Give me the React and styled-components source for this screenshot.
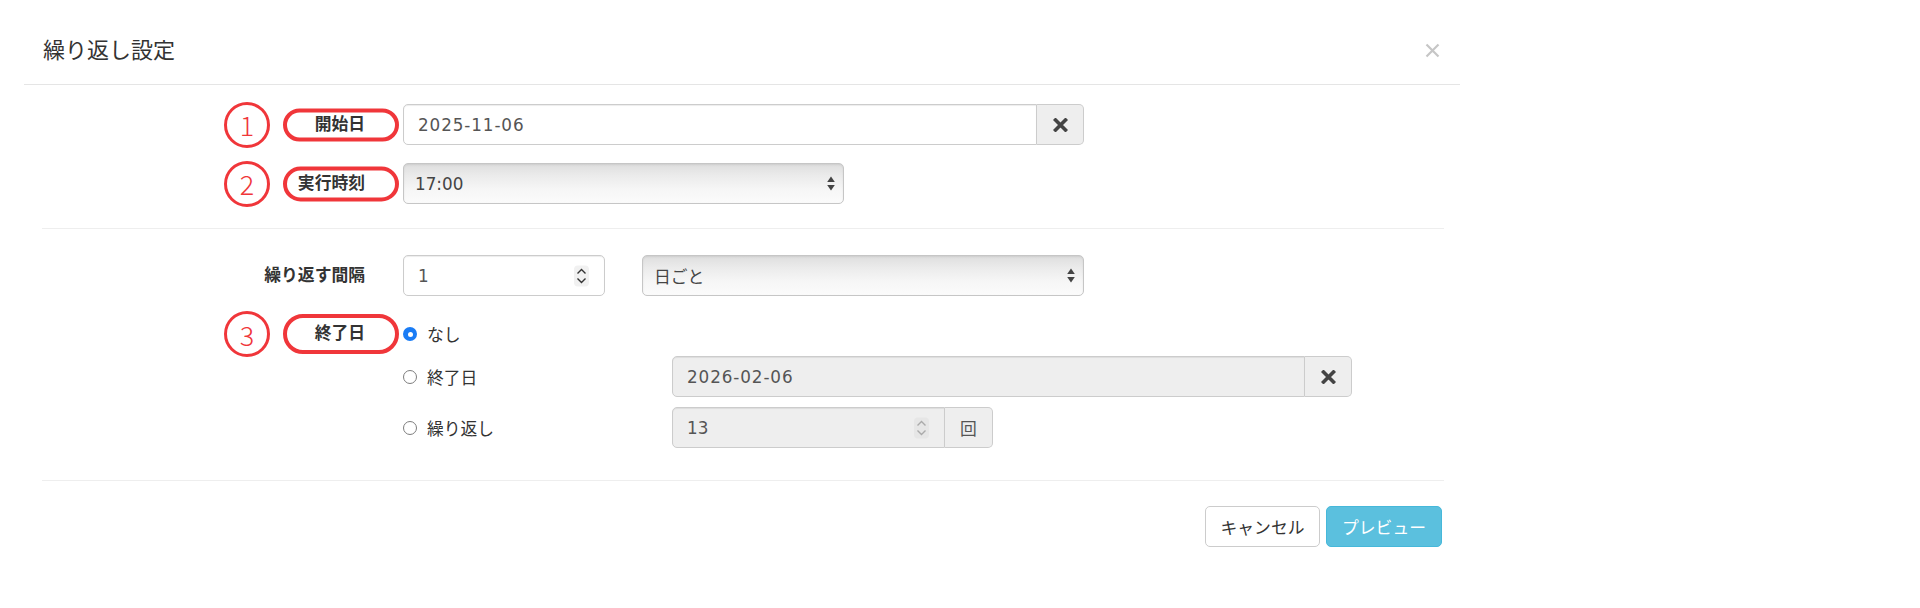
import React from "react";
import styled, { createGlobalStyle } from "styled-components";

const RED = "#f0363a";

const GlobalStyle = createGlobalStyle`
  html, body { margin: 0; padding: 0; background: #fff; }
  body {
    font-family: "Liberation Sans", "Noto Sans CJK JP", sans-serif;
    color: #333;
    font-size: 16.8px;
  }
  * { box-sizing: border-box; }
`;

const Modal = styled.div`
  width: 1436px;
  margin: 17px 0 0 24px;
  background: #fff;
`;

const Header = styled.div`
  display: flex;
  align-items: center;
  justify-content: space-between;
  padding: 18px 20px 18px 19px;
  border-bottom: 1px solid #e5e5e5;
`;

const Title = styled.h4`
  margin: 0;
  font-size: 22px;
  line-height: 31px;
  font-weight: normal;
  color: #333;
`;

const CloseButton = styled.button`
  border: 0;
  background: none;
  padding: 0;
  width: 16px;
  height: 16px;
  display: flex;
  align-items: center;
  justify-content: center;
  cursor: pointer;
`;

const Body = styled.div`
  padding: 19px 16px 0 18px;
`;

const Section = styled.div`
  display: flex;
  flex-direction: column;
  gap: 18px;
`;

const Divider = styled.hr`
  border: 0;
  border-top: 1px solid #eee;
  margin: ${(p) => p.$margin};
`;

const Row = styled.div`
  display: grid;
  grid-template-columns: 323px auto;
  column-gap: 38px;
  align-items: start;
`;

const Label = styled.label`
  position: relative;
  display: block;
  text-align: right;
  font-weight: bold;
  font-size: 16.8px;
  line-height: ${(p) => p.$h || 41}px;
  height: ${(p) => p.$h || 41}px;
  color: #333;
`;

const Pill = styled.span`
  position: absolute;
  right: -34px;
  top: 50%;
  width: 116px;
  height: ${(p) => p.$h}px;
  transform: translateY(-50%);
  border: 4px solid ${RED};
  border-radius: 999px;
`;

const NumberBadge = styled.span`
  position: absolute;
  right: 95px;
  top: 50%;
  width: 46px;
  height: 46px;
  transform: translateY(-50%);
  border: 3px solid ${RED};
  border-radius: 50%;
  color: ${RED};
  font-family: "Noto Sans CJK JP", "Liberation Sans", sans-serif;
  font-weight: 300;
  font-size: 27px;
  line-height: 1;
  display: flex;
  align-items: center;
  justify-content: center;
`;

const Controls = styled.div`
  display: flex;
  align-items: center;
  gap: ${(p) => p.$gap || 0}px;
`;

const Group = styled.div`
  display: flex;
  width: ${(p) => p.$w}px;
  height: 41px;
`;

const Field = styled.div`
  position: relative;
  height: 41px;
  display: flex;
  align-items: center;
  padding: 0 14px;
  border: 1px solid #ccc;
  border-radius: ${(p) => (p.$joined ? "5px 0 0 5px" : "5px")};
  background: ${(p) => (p.$disabled ? "#eeeeee" : "#fff")};
  box-shadow: inset 0 1px 1px rgba(0, 0, 0, 0.075);
  color: #555;
  font-family: "DejaVu Sans", "Noto Sans CJK JP", sans-serif;
  font-size: 16.8px;
  letter-spacing: ${(p) => (p.$date ? "0.9px" : "0")};
  width: ${(p) => (p.$w ? `${p.$w}px` : "auto")};
  flex: ${(p) => (p.$w ? "none" : "1")};
`;

const Addon = styled.div`
  width: ${(p) => p.$w || 47}px;
  height: 41px;
  display: flex;
  align-items: center;
  justify-content: center;
  border: 1px solid #ccc;
  border-left: 0;
  border-radius: 0 5px 5px 0;
  background: #eee;
  color: #555;
  font-family: "Noto Sans CJK JP", sans-serif;
  font-size: 16.8px;
`;

const Select = styled.div`
  width: ${(p) => p.$w}px;
  height: 41px;
  display: flex;
  align-items: center;
  justify-content: space-between;
  padding: 0 8px 0 11px;
  border: 1px solid #c6c6c6;
  border-radius: 5px;
  background: linear-gradient(to bottom, #dedede 0%, #ebebeb 30%, #f6f6f6 65%, #fbfbfb 100%);
  box-shadow: inset 0 1px 2px rgba(0, 0, 0, 0.08);
  color: #444;
  font-family: "DejaVu Sans", "Noto Sans CJK JP", sans-serif;
  font-size: 16.8px;
`;

const Spinner = styled.span`
  position: absolute;
  right: 15px;
  top: 50%;
  transform: translateY(-50%);
  width: 15px;
  height: 21px;
  border-radius: 4px;
  background: ${(p) => (p.$disabled ? "#e6e6e6" : "#f1f1f1")};
  display: flex;
  align-items: center;
  justify-content: center;
`;

const EndGroup = styled.div`
  display: flex;
  flex-direction: column;
`;

const OptionRow = styled.div`
  display: grid;
  grid-template-columns: 269px auto;
  align-items: center;
  height: ${(p) => p.$h}px;
  margin-top: ${(p) => p.$mt || 0}px;
`;

const RadioLabel = styled.div`
  display: flex;
  align-items: center;
  gap: 10px;
  font-size: 16.8px;
  color: #333;
`;

const Radio = styled.span`
  width: 14px;
  height: 14px;
  border-radius: 50%;
  display: inline-flex;
  align-items: center;
  justify-content: center;
  background: ${(p) => (p.$checked ? "#1a7cf5" : "#fff")};
  border: ${(p) => (p.$checked ? "0" : "1.5px solid #7d7d7d")};
  &::after {
    content: "";
    display: ${(p) => (p.$checked ? "block" : "none")};
    width: 5px;
    height: 5px;
    border-radius: 50%;
    background: #fff;
  }
`;

const Footer = styled.div`
  display: flex;
  justify-content: flex-end;
  gap: 6px;
  padding: 0 18px 18px;
`;

const Button = styled.button`
  height: 41px;
  padding: 0 14.4px;
  min-width: ${(p) => p.$w}px;
  border-radius: 5px;
  font-family: "Liberation Sans", "Noto Sans CJK JP", sans-serif;
  font-size: 16.8px;
  cursor: pointer;
  border: 1px solid ${(p) => (p.$primary ? "#46b8da" : "#ccc")};
  background: ${(p) => (p.$primary ? "#5bc0de" : "#fff")};
  color: ${(p) => (p.$primary ? "#fff" : "#333")};
`;

const XIcon = () => (
  <svg width="15" height="15" viewBox="0 0 15 15">
    <path d="M1.5 1.5 L13.5 13.5 M13.5 1.5 L1.5 13.5" stroke="#c6c6c6" strokeWidth="2.2" />
  </svg>
);

const RemoveIcon = () => (
  <svg width="15" height="14" viewBox="0 0 15 14">
    <path d="M2.5 2 L12.5 12 M12.5 2 L2.5 12" stroke="#444" strokeWidth="3.6" strokeLinecap="square" />
  </svg>
);

const SelectArrows = () => (
  <svg width="8" height="15" viewBox="0 0 8 15">
    <polygon points="4,0.5 7.8,6 0.2,6" fill="#444" />
    <polygon points="0.2,9 7.8,9 4,14.5" fill="#444" />
  </svg>
);

const Chevrons = ({ color }) => (
  <svg width="11" height="17" viewBox="0 0 11 17">
    <polyline points="1.5,6 5.5,2 9.5,6" fill="none" stroke={color} strokeWidth="1.4" />
    <polyline points="1.5,11 5.5,15 9.5,11" fill="none" stroke={color} strokeWidth="1.4" />
  </svg>
);

const Annotated = ({ n, pillH, h, children }) => (
  <Label $h={h}>
    <NumberBadge>{n}</NumberBadge>
    <Pill $h={pillH} />
    {children}
  </Label>
);

export default function App() {
  return (
    <>
      <GlobalStyle />
      <Modal>
        <Header>
          <Title>繰り返し設定</Title>
          <CloseButton aria-label="閉じる">
            <XIcon />
          </CloseButton>
        </Header>
        <Body>
          <Section>
            <Row>
              <Annotated n="1" pillH={33}>開始日</Annotated>
              <Group $w={681}>
                <Field $joined $date>2025-11-06</Field>
                <Addon>
                  <RemoveIcon />
                </Addon>
              </Group>
            </Row>
            <Row>
              <Annotated n="2" pillH={35}>実行時刻</Annotated>
              <Select $w={441}>
                <span>17:00</span>
                <SelectArrows />
              </Select>
            </Row>
          </Section>
          <Divider $margin="24px 0 26px" />
          <Section>
            <Row>
              <Label>繰り返す間隔</Label>
              <Controls $gap={37}>
                <Field $w={202}>
                  1
                  <Spinner>
                    <Chevrons color="#333" />
                  </Spinner>
                </Field>
                <Select $w={442}>
                  <span>日ごと</span>
                  <SelectArrows />
                </Select>
              </Controls>
            </Row>
            <Row>
              <Annotated n="3" pillH={40} h={40}>終了日</Annotated>
              <EndGroup>
                <OptionRow $h={40}>
                  <RadioLabel>
                    <Radio $checked />
                    なし
                  </RadioLabel>
                </OptionRow>
                <OptionRow $h={41} $mt={2}>
                  <RadioLabel>
                    <Radio />
                    終了日
                  </RadioLabel>
                  <Group $w={680}>
                    <Field $joined $disabled $date>
                      2026-02-06
                    </Field>
                    <Addon>
                      <RemoveIcon />
                    </Addon>
                  </Group>
                </OptionRow>
                <OptionRow $h={41} $mt={10}>
                  <RadioLabel>
                    <Radio />
                    繰り返し
                  </RadioLabel>
                  <Group $w={321}>
                    <Field $joined $disabled>
                      13
                      <Spinner $disabled>
                        <Chevrons color="#aaa" />
                      </Spinner>
                    </Field>
                    <Addon $w={48}>回</Addon>
                  </Group>
                </OptionRow>
              </EndGroup>
            </Row>
          </Section>
          <Divider $margin="32px 0 25px" />
        </Body>
        <Footer>
          <Button $w={115}>キャンセル</Button>
          <Button $primary $w={116}>
            プレビュー
          </Button>
        </Footer>
      </Modal>
    </>
  );
}
